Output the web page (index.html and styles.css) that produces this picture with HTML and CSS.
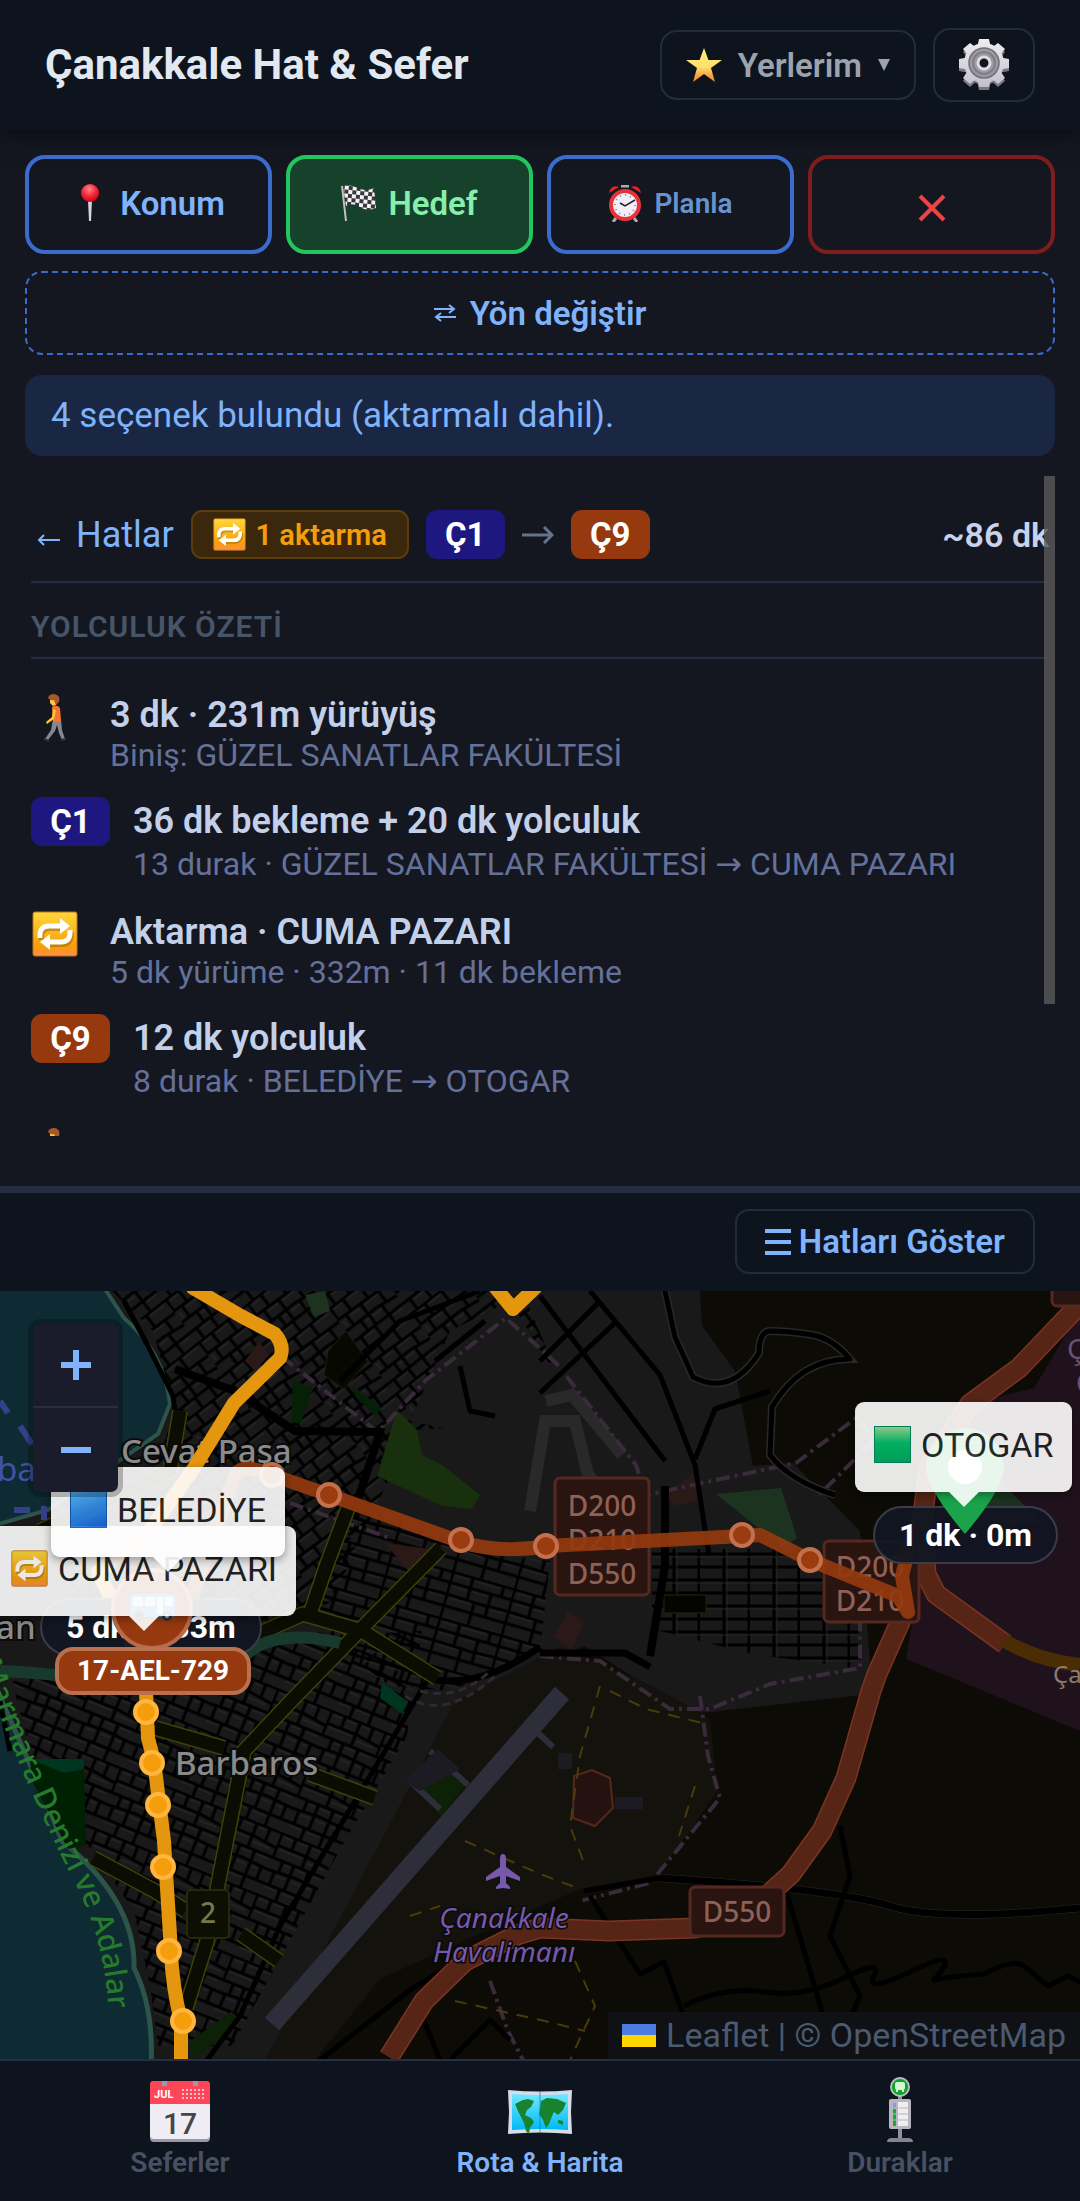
FILE: index.html
```html
<!DOCTYPE html>
<html lang="tr">
<head>
    <meta charset="UTF-8">
    <meta name="viewport" content="width=device-width, initial-scale=1.0">
    <title>Çanakkale Hat &amp; Sefer</title>
    <link rel="stylesheet" href="styles.css">
</head>
<body>

    <!-- Shared icons -->
    <svg class="sprite" aria-hidden="true">
        <defs>
            <linearGradient id="gold" x1="0" y1="0" x2="0" y2="1">
                <stop offset="0" stop-color="#fff07a"/><stop offset=".55" stop-color="#ffdf6b"/><stop offset="1" stop-color="#f57c1f"/>
            </linearGradient>
            <linearGradient id="silver" x1="0" y1="0" x2="0" y2="1">
                <stop offset="0" stop-color="#eeeeee"/><stop offset="1" stop-color="#c3c0cc"/>
            </linearGradient>
            <linearGradient id="orange" x1="0" y1="0" x2="0" y2="1">
                <stop offset="0" stop-color="#ffd83c"/><stop offset=".8" stop-color="#f79d08"/><stop offset="1" stop-color="#ff8c50"/>
            </linearGradient>
            <linearGradient id="sea" x1="0" y1="0" x2="0" y2="1">
                <stop offset="0" stop-color="#72e8ff"/><stop offset="1" stop-color="#00b9f5"/>
            </linearGradient>
            <radialGradient id="red" cx=".45" cy=".3" r=".7">
                <stop offset="0" stop-color="#ff8a8f"/><stop offset=".5" stop-color="#fb2c3c"/><stop offset="1" stop-color="#c80014"/>
            </radialGradient>
            <pattern id="checks" width="8" height="8" patternUnits="userSpaceOnUse" patternTransform="rotate(6)">
                <rect width="8" height="8" fill="#f4f4f4"/>
                <path d="M0 0h4v4H0zM4 4h4v4H4z" fill="#39353c"/>
            </pattern>
            <symbol id="repeat" viewBox="0 0 46 46">
                <rect x="1" y="1" width="44" height="44" rx="2" fill="url(#orange)" stroke="#b9731d"/>
                <path d="M9 29q-1-12 9-12h12M39 21q1 12-9 12H18" stroke="#8a5a10" stroke-opacity=".45" fill="none" stroke-width="6"/>
                <path d="M8 27q-1-12 9-12h12M38 19q1 12-9 12H17" stroke="#fff" fill="none" stroke-width="5"/>
                <path d="M28 7l10 8-10 8zM18 23L8 31l10 8z" fill="#fff"/>
            </symbol>
            <symbol id="walker" viewBox="0 0 22 48">
                <path d="M9 25l-2 11-6 9 3 1 7-9 2-6 2 8 3 7 3-1-3-9-1-11z" fill="#85868f"/>
                <path d="M0 45l5 2M17 46l5-1" stroke="#333" stroke-width="2"/>
                <path d="M8 13q5-3 8 1l1 13q-4 2-8 0z" fill="#f9742b"/>
                <path d="M9 15l-1 8-6 5 1 2 7-5 2-9z" fill="#ffc53d"/>
                <path d="M6 4q4-4 7 0l-1 7-3 1-3-3z" fill="#ffc53d"/>
                <path d="M4 4q1-4 6-4 7 1 5 8l-3 3-2-5q-4 1-6-2z" fill="#a4582b"/>
            </symbol>
        </defs>
    </svg>

    <header class="app-header">
        <h1>Çanakkale Hat &amp; Sefer</h1>
        <button class="header-button" type="button">
            <svg width="36" height="34" viewBox="0 0 36 34" aria-hidden="true"><path d="M18 0l4.400 12H36L25 20l4 14-11-8-11 8 4-14L0 12h13.600z" fill="url(#gold)"/></svg>
            <span>Yerlerim</span>
            <svg width="12" height="12" viewBox="0 0 12 12" aria-hidden="true"><path d="M0 0h12L6 12z" fill="#9ca3af"/></svg>
        </button>
        <button class="header-button gear-button" type="button" aria-label="Ayarlar">
            <svg width="50" height="52" viewBox="0 0 50 52" aria-hidden="true">
                <g fill="#7a7684" transform="translate(0 3)">
                    <circle cx="25" cy="24" r="19"/>
                    <path d="M20 0h10l2 10H18zM20 48h10l2-10H18zM0 20v9l11 2V18zM50 20v9l-11 2V18zM4 10l7-6 8 6-8 9zM46 10l-7-6-8 6 8 9zM4 39l7 6 8-7-9-8zM46 39l-7 6-8-7 9-8z"/>
                </g>
                <g fill="url(#silver)">
                    <circle cx="25" cy="24" r="20"/>
                    <path d="M20 0h10l2 10H18zM20 48h10l2-10H18zM0 20v9l11 2V18zM50 20v9l-11 2V18zM4 10l7-6 8 6-8 9zM46 10l-7-6-8 6 8 9zM4 39l7 6 8-7-9-8zM46 39l-7 6-8-7 9-8z"/>
                </g>
                <circle cx="25" cy="24" r="15" fill="#9c9aa3" stroke="#6f6d76" stroke-width="1.500"/>
                <circle cx="25" cy="24" r="11" fill="none" stroke="#7f7d87" stroke-width="2"/>
                <circle cx="25" cy="24" r="6" fill="#101620" stroke="#dedee2" stroke-width="3"/>
            </svg>
        </button>
    </header>

    <main class="planner">
        <div class="actions">
            <button class="action action-from" type="button">
                <svg width="20" height="38" viewBox="0 0 20 38" aria-hidden="true"><path d="M8 16h4l-1 21h-2z" fill="#d6d3e2"/><circle cx="10" cy="9" r="9" fill="url(#red)"/></svg>
                Konum
            </button>
            <button class="action action-target" type="button">
                <svg width="35" height="37" viewBox="0 0 35 37" aria-hidden="true"><path d="M2 1q7-2 15 2t16 0l2 20q-9 4-16-1T5 21z" fill="url(#checks)"/><path d="M1 1l4 35" stroke="#c4bfc4" stroke-width="2"/></svg>
                Hedef
            </button>
            <button class="action action-plan" type="button">
                <svg width="34" height="37" viewBox="0 0 34 37" aria-hidden="true">
                    <path d="M8 33l-3 4M26 33l3 4M13 1h8" stroke="#aaa" stroke-width="3"/>
                    <path d="M1 8Q3-1 11 2zM33 8Q31-1 23 2z" fill="#e62222"/>
                    <circle cx="17" cy="20" r="14" fill="#f2eef8" stroke="#e8323a" stroke-width="4"/>
                    <circle cx="17" cy="20" r="10" fill="none" stroke="#8c8796" stroke-width="2" stroke-dasharray="1 4.200"/>
                    <path d="M12 18l5 3 10-6" fill="none" stroke="#222" stroke-width="1.500"/>
                </svg>
                Planla
            </button>
            <button class="action action-clear" type="button" aria-label="Temizle">
                <svg width="28" height="28" viewBox="0 0 28 28" aria-hidden="true"><path d="M2 2l24 24M26 2L2 26" stroke="#ef4444" stroke-width="4"/></svg>
            </button>
        </div>

        <button class="reverse" type="button">
            <svg width="22" height="18" viewBox="0 0 22 18" aria-hidden="true"><path d="M0 5h20M15 1l5 4-5 4M22 13H2M7 9l-5 4 5 4" fill="none" stroke="#7fb3fb" stroke-width="2"/></svg>
            Yön değiştir
        </button>

        <p class="status">4 seçenek bulundu (aktarmalı dahil).</p>

        <section class="details">
            <div class="details-scroll">
                <div class="route-head">
                    <a class="back" href="#">
                        <svg width="23" height="12" viewBox="0 0 23 12" aria-hidden="true"><path d="M23 6H2M7 1L2 6l5 5" fill="none" stroke="#7fb3fb" stroke-width="2"/></svg>
                        Hatlar
                    </a>
                    <span class="transfer"><svg width="33" height="33" aria-hidden="true"><use href="#repeat"/></svg>1 aktarma</span>
                    <span class="line line-c1">Ç1</span>
                    <svg width="32" height="18" viewBox="0 0 32 18" aria-hidden="true"><path d="M0 9h30M22 1l8 8-8 8" fill="none" stroke="#64748b" stroke-width="3"/></svg>
                    <span class="line line-c9">Ç9</span>
                    <strong class="total">~86 dk</strong>
                </div>
                <h2>YOLCULUK ÖZETİ</h2>

                <ol class="steps">
                    <li class="step">
                        <svg class="walk-icon" width="22" height="48" aria-hidden="true"><use href="#walker"/></svg>
                        <div><h3>3 dk · 231m yürüyüş</h3><p>Biniş: GÜZEL SANATLAR FAKÜLTESİ</p></div>
                    </li>
                    <li class="step step-ride">
                        <span class="line line-c1">Ç1</span>
                        <div><h3>36 dk bekleme + 20 dk yolculuk</h3><p>13 durak · GÜZEL SANATLAR FAKÜLTESİ → CUMA PAZARI</p></div>
                    </li>
                    <li class="step">
                        <svg class="repeat-icon" width="46" height="46" aria-hidden="true"><use href="#repeat"/></svg>
                        <div><h3>Aktarma · CUMA PAZARI</h3><p>5 dk yürüme · 332m · 11 dk bekleme</p></div>
                    </li>
                    <li class="step step-ride">
                        <span class="line line-c9">Ç9</span>
                        <div><h3>12 dk yolculuk</h3><p>8 durak · BELEDİYE → OTOGAR</p></div>
                    </li>
                    <li class="step">
                        <svg class="walk-icon" width="22" height="48" aria-hidden="true"><use href="#walker"/></svg>
                    </li>
                </ol>
            </div>
            <span class="scroll-thumb"></span>
        </section>
    </main>

    <div class="map-toolbar">
        <button type="button">
            <svg width="26" height="26" viewBox="0 0 26 26" aria-hidden="true"><path d="M0 2h26M0 13h26M0 24h26" stroke="#7fb3fb" stroke-width="4"/></svg>
            Hatları Göster
        </button>
    </div>

    <section class="map" aria-label="Harita">
        <svg class="map-tiles" viewBox="0 0 1080 769" preserveAspectRatio="xMinYMin slice">
            <defs>
                <pattern id="blocksA" width="62" height="54" patternUnits="userSpaceOnUse" patternTransform="rotate(-38)">
                    <path d="M0 1h62M0 15l62 2M0 29h40l22 3M0 42h62M1 0v16M17 0v15M38 0v16M10 15v14M28 16v26M50 16v14M18 29v13M44 30v24M8 42v12M26 42v12" fill="none" stroke="#000" stroke-width="3"/>
                    <path d="M4 4h10M20 4h15M41 4h18M13 19h12M31 19h16M21 33h5M31 33h11M47 45h12M4 19v7M11 45h12" stroke="#2b2b2b"/>
                </pattern>
                <pattern id="blocksB" width="58" height="66" patternUnits="userSpaceOnUse" patternTransform="rotate(22)">
                    <path d="M0 1h58M0 14h34l24 3M0 27h58M0 40l30-2 28 2M0 54h58M1 0v27M16 0v14M32 0v28M46 0v16M12 27v12M24 27v27M40 28v38M8 40v14M20 54v12M52 40v14" fill="none" stroke="#000" stroke-width="3"/>
                    <path d="M4 4h9M19 4h10M35 4h8M4 17h25M35 20h18M15 30h6M27 30h10M43 30h12M11 43h10M27 43h10M43 43h6M4 57h13M23 57h14" stroke="#2b2b2b"/>
                </pattern>
                <pattern id="blocksC" width="64" height="48" patternUnits="userSpaceOnUse" patternTransform="rotate(16)">
                    <path d="M0 1h64M0 12h64M0 24l36 1 28-1M0 36h64M1 0v48M22 0v24M44 12v24M30 25v23M54 0v12" fill="none" stroke="#000" stroke-width="3"/>
                    <path d="M4 4h15M25 4h26M4 15h15M25 15h16M4 27h23M47 27h14" stroke="#292929"/>
                </pattern>
                <pattern id="blocksD" width="50" height="26" patternUnits="userSpaceOnUse">
                    <path d="M0 3h50M0 16h50M24 0v26M49 0v26" stroke="#000" stroke-width="3"/>
                    <path d="M0 6h50M27 0v26" stroke="#242424"/>
                </pattern>
                <path id="coastText" d="M-20 372Q26 498 74 590T104 800"/>
            </defs>

            <!-- Land use -->
            <rect width="1080" height="769" fill="#0c0b06"/>
            <path d="M0 0h700l2 35 33 45 18 95 40-3 67 68 11 145v18l-169 19-55-27-62-40-90 35-77 113-150 266H0z" fill="#191919"/>
            <path d="M455 410l105-54 95 40 55 32 8 72-60 84-78 14-90 40-110 50-65 81H265z" fill="#13120d"/>
            <path d="M1080 20l-46 77-64 16-50 170-14 85 174 72z" fill="#1f121d"/>
            <path d="M945 195l45-15 50 50-40 6z" fill="#1b3320"/>
            <path d="M-5 395Q34 480 62 550q74 60 72 127 20 40 17 97H-5z" fill="#0e2a33" stroke="#2d544a" stroke-width="5"/>
            <path d="M-5-5h108l21 32q40 34 46 86l-12 30-110 76-53 15z" fill="#0e2a33" stroke="#2d544a" stroke-width="4"/>

            <!-- Streets -->
            <path d="M112 0h410l30 70-50 60-100 30-70 150-60 30H70v-60l70-60 35-100-22-80z" fill="url(#blocksA)"/>
            <path d="M12 390l130-20 90-20 190-10-15 105-65 110-110 200H158l-8-60-16-75-41-60-50-54z" fill="url(#blocksB)"/>
            <path d="M350 210l120 50 80 10-10 90-90 40-60-5-80-60z" fill="url(#blocksC)"/>
            <path d="M652 258h200l10 120-110-15-100-25z" fill="url(#blocksD)"/>
            <path d="M450 40l60-30 50 80-60 60-90-20zM405 140l70-5 90 60-20 60-140-70z" fill="#191919"/>

            <!-- Parks -->
            <path d="M397 119l20 20 5 25 20 10 38 30-8 14-30-3-65-30z" fill="#18300e"/>
            <path d="M293 88l20 10-12 34h-10zM353 95l28 22-6 8-20-20z" fill="#062008"/>
            <path d="M305 4l20-4 5 20-16 6z" fill="#1d3320"/>
            <path d="M30 470l54-2 2 86-18 4-36-68z" fill="#002004"/>
            <path d="M30 468h54v10l-20 4zM382 391l26 20-6 12-22-16z" fill="#00351f"/>
            <path d="M190 750l42-30 6 12-44 37zM420 500l30-18 15 12-24 32z" fill="#0d2106"/>
            <path d="M716 203l65-6 16 50-14 10z" fill="#1c3320"/>
            <path d="M328 60l18-20 22 30-24 28-20-14z" fill="#080803" stroke="#20200c"/>
            <path d="M665 205l30-24 4 28-22 6zM554 345l14-25 16 10-12 30zM245 70l14-20 10 14-14 16zM385 252l60 8-32 26z" fill="#2b1918"/>
            <path d="M574 485l18-6 18 8 3 30-18 18-22-8z" fill="#241110" stroke="#572819" stroke-width="2"/>
            <path d="M664 304h42v18h-42z" fill="#050500" stroke="#242406"/>

            <!-- Monument and faint paths -->
            <path d="M530 220l15-90h30l12 50 24 45M546 110l26-6 50 60" fill="none" stroke="#292929" stroke-width="12"/>
            <g fill="none" stroke="#3a2b3c" stroke-width="4" stroke-dasharray="14 5 3 5">
                <path d="M282 66l70 55 26 20 48-52 80-62 50 45 80 102 10 30 65-14 85-18 60-45 20 20-60 60"/>
                <path d="M540 365l60 5 70 48h40l60-25 90-16v-50M700 405l8 60 12 42-70 85-70 18M490 690l18 50 15 29M290 212l100 35"/>
            </g>
            <g fill="none" stroke="#493b0b" stroke-width="2" stroke-dasharray="12 9">
                <path d="M465 550l75 33 40 15M600 395l-20 70-10 70 15 40M610 400l36 18 60 15M695 495l-16 50M410 625l30-10M455 710l90 20 40 10M575 670l20 45-25 54"/>
            </g>

            <!-- Local roads -->
            <g fill="none" stroke="#282828" stroke-width="8">
                <path d="M665 0l10 46 18 40q38 20 66-24 0-20 10-22 20 0 44 4 20 4 37 24-50 0-78 48l-2 48q20 26 65 40"/>
                <path d="M660 587q180 12 230 28t190 2"/>
            </g>
            <g fill="none" stroke="#000" stroke-width="5" stroke-linejoin="round">
                <path d="M665 0l10 46 18 40q38 20 66-24 0-20 10-22 20 0 44 4 20 4 37 24-50 0-78 48l-2 48q20 26 65 40M695 168l20-50 55-18M590 0l70 84 35 90 14 90M540 5l125 165M600 10l-60 60M617 30l-77 72"/>
                <path d="M584 600l76-13M590 605l50 78 24-12 22 60-4 38M684 715q40-20 80-14t80-14 30-2 40-6 20 10q20-4 50-6 30-16 40-8l24 20 20-10 20 10"/>
                <path d="M840 535l10 50-20 60 30 60-30 70M786 600l30 100 20 70M124 10l24 45 25 50 4 30M340 90l60-60 80-30M460 75l10 45 25 5M435 70l50-40"/>
                <path d="M430 385l-60 100-90 150-40 90-45 60M320 769l90-70 50-30M420 720l20 49M450 769q30-30 40-40l20 20M10 460l-10-50"/>
            </g>
            <path d="M660 587q180 12 230 28t190 2" fill="none" stroke="#000" stroke-width="7"/>
            <path d="M175 78l60 22 60 40 85 1-28 86M665 195v80l-15 90" fill="none" stroke="#000" stroke-width="8"/>
            <path d="M540 362h85l25 14M430 388q50 10 110-32" fill="none" stroke="#000" stroke-width="7"/>

            <!-- Secondary roads -->
            <g fill="none" stroke-linejoin="round">
                <path d="M348 217l-21 56-17 50M441 257l-79 80-71 73-47 50-24 123-13 67-21 67M258 343l45-20 59 17 75 47M155 437l69 20M310 483l65 24M93 567l62 33 31 20M241 643l38 27M180 120l-10 60-130 60" stroke="#404008" stroke-width="16"/>
                <path d="M348 217l-21 56-17 50M441 257l-79 80-71 73-47 50-24 123-13 67-21 67M258 343l45-20 59 17 75 47M155 437l69 20M310 483l65 24M93 567l62 33 31 20M241 643l38 27M180 120l-10 60-130 60" stroke="#0b0d02" stroke-width="13"/>
            </g>
            <path d="M0 380q80 4 120 14t90-8l50-32q30-14 80-2" fill="none" stroke="#183a2c" stroke-width="12"/>
            <path d="M405 405q40 26 90-20M420 400q40 10 70-20" fill="none" stroke="#302730" stroke-width="3" stroke-dasharray="8 5"/>

            <!-- Runway -->
            <path d="M410 490l30 28M430 460l38 34M525 430l28 26" fill="none" stroke="#2e2d3a" stroke-width="6"/>
            <path d="M272 733L562 402" stroke="#2e2d3a" stroke-width="19"/>
            <path d="M404 490l34-32 22 20-40 22zM558 462h14v16h-14zM615 506h28v12h-28z" fill="#1c1a22"/>

            <!-- Highways -->
            <g fill="none" stroke-linejoin="round">
                <path d="M1080 13l-61 64-49 36-41 64-7 53 4 53 10 20 69 50M905 320l-28 63-6 17-25 87-24 53-31 43-44 40-52 14-86 3-69-3-23 7-52 26-41 40-35 56" stroke="#7a3423" stroke-width="21"/>
                <path d="M1080 13l-61 64-49 36-41 64-7 53 4 53 10 20 69 50M905 320l-28 63-6 17-25 87-24 53-31 43-44 40-52 14-86 3-69-3-23 7-52 26-41 40-35 56" stroke="#572516" stroke-width="18"/>
                <path d="M1005 350q34 20 75 24" stroke="#4a2c05" stroke-width="14"/>
            </g>

            <!-- Road shields -->
            <g class="shield">
                <rect x="555" y="187" width="94" height="117" rx="5"/>
                <rect x="824" y="250" width="95" height="81" rx="5"/>
                <rect x="690" y="596" width="94" height="49" rx="5"/>
                <rect x="1052" y="-20" width="60" height="35" rx="5"/>
            </g>
            <g class="shield-text">
                <text x="602" y="225">D200</text>
                <text x="602" y="259">D210</text>
                <text x="602" y="293">D550</text>
                <text x="870" y="286">D200</text>
                <text x="870" y="320">D210</text>
                <text x="737" y="631">D550</text>
            </g>
            <rect x="187" y="599" width="42" height="48" rx="4" fill="#0d0f02" stroke="#25290a" stroke-width="2"/>
            <text class="shield-two" x="208" y="632">2</text>

            <!-- Place names -->
            <g class="place">
                <text x="121" y="172">Cevat Paşa</text>
                <text x="175" y="484">Barbaros</text>
                <text x="-4" y="348">an</text>
            </g>
            <text class="ferry" x="-3" y="190">ba</text>
            <path d="M0 110l8 12M20 135l12 18M14 219h16M44 215v14" stroke="#35408a" stroke-width="6"/>
            <g class="airport">
                <text x="504" y="637">Çanakkale</text>
                <text x="504" y="671">Havalimanı</text>
            </g>
            <path d="M503 563q3 0 3 5v8l14 10v4l-14-5v7l4 4v2l-7-1-7 1v-2l4-4v-7l-14 5v-4l14-10v-8q0-5 3-5z" fill="#7659ad"/>
            <g class="purple-place"><text x="1067" y="68">Ç</text><text x="1076" y="102">O</text></g>
            <text class="small-place" x="1053" y="392">Ça</text>
            <text class="region"><textPath href="#coastText">Marmara Denizi ve Adalar</textPath></text>

            <!-- Route lines -->
            <g fill="none" stroke-linecap="round" stroke-linejoin="round" stroke-width="14">
                <path d="M193-3l48 28 34 18q10 12 5 24l-46 45-40 65-44 62-52 42 30 60 18 60 2 46 6 23 10 80 7 110q1 34 10 70v40M496-3l17 21 22-21" stroke="#e5960f"/>
                <path d="M193 303l20-58 22-60q6-14 37-1l57 20 132 47q40 12 86 4l196-10 17-1 50 25 88 36 10 16-6-36 8-32" stroke="#943a0f" stroke-opacity=".92"/>
            </g>
            <g fill="#9a3b10" stroke="#c3704e" stroke-width="4">
                <circle cx="272" cy="184" r="11"/><circle cx="329" cy="204" r="11"/><circle cx="461" cy="249" r="11"/>
                <circle cx="546" cy="255" r="11"/><circle cx="742" cy="244" r="11"/><circle cx="810" cy="269" r="11"/>
            </g>
            <g fill="#f59e0b" stroke="#ffb540" stroke-width="4">
                <circle cx="146" cy="421" r="11"/><circle cx="152" cy="472" r="11"/><circle cx="158" cy="514" r="11"/>
                <circle cx="163" cy="576" r="11"/><circle cx="169" cy="660" r="11"/><circle cx="183" cy="730" r="11"/>
            </g>
        </svg>

        <!-- Markers -->
        <span class="pill pill-transfer">5 dk · 333m</span>
        <span class="pill pill-end">1 dk · 0m</span>
        <svg class="pin" width="78" height="106" viewBox="0 0 78 106" aria-hidden="true"><path d="M39 106Q0 60 0 39a39 39 0 0 1 78 0q0 21-39 67z" fill="#1aa34a"/><circle cx="39" cy="39" r="17" fill="#fff"/></svg>
        <span class="bus">
            <svg width="46" height="28" viewBox="0 0 46 28" aria-hidden="true">
                <rect width="45" height="23" rx="3" fill="#3b86dd"/><path d="M3 3h10v9H3zM15 3h10v9H15zM27 3h6v17h-6zM35 3h8v9h-8z" fill="#cce9fa"/>
                <circle cx="9" cy="22" r="5" fill="#333"/><circle cx="37" cy="22" r="5" fill="#333"/><circle cx="37" cy="22" r="2" fill="#ccc"/>
            </svg>
        </span>
        <span class="plate">17-AEL-729</span>
        <div class="tip tip-transfer"><svg width="37" height="37" aria-hidden="true"><use href="#repeat"/></svg>CUMA PAZARI</div>
        <div class="tip tip-board"><i class="square square-blue"></i>BELEDİYE</div>
        <div class="tip tip-end"><i class="square square-green"></i>OTOGAR</div>

        <div class="zoom">
            <button type="button" aria-label="Yakınlaştır"><svg width="30" height="30" viewBox="0 0 30 30"><path d="M15 0v30M0 15h30" stroke="#7fb3fb" stroke-width="6"/></svg></button>
            <button type="button" aria-label="Uzaklaştır"><svg width="30" height="30" viewBox="0 0 30 30"><path d="M0 15h30" stroke="#7fb3fb" stroke-width="6"/></svg></button>
        </div>
        <div class="attribution">
            <i class="flag"></i><a href="#">Leaflet</a> | © <a href="#">OpenStreetMap</a>
        </div>
    </section>

    <nav class="tabs">
        <a href="#">
            <svg width="60" height="62" viewBox="0 0 60 62" aria-hidden="true">
                <rect width="60" height="61" rx="4" fill="#9c98ab"/>
                <path d="M0 20h60v34q0 4-4 4H4q-4 0-4-4z" fill="#efedf3"/>
                <path d="M0 4q0-4 4-4h8v5h5V0h26v5h5V0h8q4 0 4 4v19H0z" fill="#ff4658"/>
                <path d="M32 9h24M32 13h24M32 17h24" stroke="#ffc3c9" stroke-width="2" stroke-dasharray="2 2"/>
                <text x="4" y="17" class="cal-month">JUL</text>
                <text x="30" y="53" class="cal-day">17</text>
            </svg>
            Seferler
        </a>
        <a href="#" class="active" aria-current="page">
            <svg width="64" height="62" viewBox="0 0 64 62" aria-hidden="true">
                <path d="M0 9q32 3 64 0l-1 22 1 22q-32-3-64 0l1-22z" fill="#d6dcec"/>
                <path d="M4 13q28 2 56 0v36q-28-2-56 0z" fill="url(#sea)"/>
                <path d="M7 23l8-4 5-1 6 2-3 6-4 3-2 5 6 3 3 4-4 6-1 6-3-3-2-8-3-6-3-6zM33 20l6-3 10 1 9 4-3 7-5 5-4-3-2 4-3 8-3 4-3-8-4-6 1-5zM50 39l5 1v4l-5-2z" fill="#18832c"/>
                <path d="M32 10v41" stroke="#0876a8" stroke-opacity=".35" stroke-width="2"/>
            </svg>
            Rota &amp; Harita
        </a>
        <a href="#">
            <svg width="28" height="66" viewBox="0 0 28 66" aria-hidden="true">
                <path d="M14 18v44" stroke="#92919d" stroke-width="4"/><path d="M1 65q0-4 5-4h16q5 0 5 4z" fill="#868391"/>
                <circle cx="14" cy="10" r="9" fill="#12a32d" stroke="#b8bac0" stroke-width="2"/>
                <rect x="9" y="5" width="10" height="8" rx="2" fill="#d6f6d8"/><path d="M10 14h2M16 14h2" stroke="#d6f6d8" stroke-width="2"/>
                <rect x="3" y="22" width="22" height="30" rx="2" fill="#b7b6c0"/>
                <path d="M12 25h10v24H12z" fill="#eee"/><path d="M7 26h3v5H7z" fill="#8f96e8"/><path d="M7 32h3v17H7z" fill="#17ac24"/>
                <path d="M6 31h17M6 37h17M6 43h17" stroke="#b7b6c0"/>
            </svg>
            Duraklar
        </a>
    </nav>

</body>
</html>
```
FILE: styles.css
```css
* {
    box-sizing: border-box;
}
body {
    margin: 0;
    min-height: 100vh;
    display: flex;
    flex-direction: column;
    background: #141720;
    color: #e2e8f0;
    font-family: Roboto, "DejaVu Sans", "Liberation Sans", sans-serif;
    font-size: 34px;
}
h1, h2, h3, p, ol {
    margin: 0;
    padding: 0;
}
button {
    font: inherit;
    color: inherit;
    background: none;
    cursor: pointer;
}
a {
    color: inherit;
    text-decoration: none;
}
svg {
    flex: none;
    display: block;
}
.sprite {
    position: absolute;
    width: 0;
    height: 0;
}

/* Header */
.app-header {
    display: flex;
    align-items: center;
    gap: 17px;
    height: 130px;
    padding: 0 45px;
    background: #0d141e;
    box-shadow: 0 4px 22px rgba(0, 0, 0, 0.5);
}
.app-header h1 {
    margin-right: auto;
    font-size: 42px;
    line-height: 50px;
    font-weight: 700;
}
.header-button {
    display: flex;
    align-items: center;
    gap: 16px;
    height: 70px;
    padding: 0 24px;
    border: 2px solid #232c3d;
    border-radius: 17px;
    color: #9ca3af;
    font-size: 33px;
    font-weight: 600;
}
.gear-button {
    height: 74px;
}

/* Planner */
.planner {
    padding: 25px 25px 50px;
}
.actions {
    display: grid;
    grid-template-columns: repeat(4, 1fr);
    gap: 14px;
}
.action {
    display: flex;
    align-items: center;
    justify-content: center;
    gap: 12px;
    height: 99px;
    padding-bottom: 4px;
    border: 4px solid #3b6bcc;
    border-radius: 20px;
    color: #7fb3fb;
    font-size: 33px;
    font-weight: 600;
}
.action-from svg {
    margin: 0 8px;
}
.action-target {
    border-color: #22c55e;
    background: #16412b;
    color: #86efac;
}
.action-plan {
    color: #6593cf;
    font-size: 28px;
}
.action-clear {
    padding: 6px 0 0;
    border-color: #7f1d1d;
}
.reverse {
    display: flex;
    align-items: center;
    justify-content: center;
    gap: 14px;
    width: 100%;
    height: 84px;
    margin: 17px 0 20px;
    border: 2px dashed #3b6bcc;
    border-radius: 17px;
    color: #7fb3fb;
    font-size: 33px;
    font-weight: 600;
}
.status {
    padding: 20px 26px;
    border-radius: 17px;
    background: #1a2744;
    color: #7fb3fb;
    font-size: 35px;
    line-height: 41px;
}

/* Route details */
.details {
    position: relative;
    margin-top: 20px;
}
.details-scroll {
    height: 30vh;
    padding: 0 6px;
    overflow: hidden;
}
.scroll-thumb {
    position: absolute;
    top: 0;
    right: 0;
    width: 11px;
    height: 80%;
    background: rgba(90, 90, 90, 0.8);
}
.route-head {
    display: flex;
    align-items: center;
    gap: 17px;
    height: 107px;
    padding-top: 12px;
    border-bottom: 2px solid #232c40;
}
.back {
    display: flex;
    align-items: center;
    gap: 16px;
    padding-left: 6px;
    color: #7fb3fb;
    font-size: 36px;
}
.back svg {
    margin-top: 10px;
}
.transfer {
    display: flex;
    align-items: center;
    gap: 10px;
    height: 49px;
    padding: 0 20px;
    border: 2px solid #5b3c0b;
    border-radius: 11px;
    background: #3b280c;
    color: #f59e0b;
    font-size: 29px;
    font-weight: 600;
}
.line {
    flex: none;
    width: 79px;
    height: 49px;
    border-radius: 11px;
    color: #fff;
    font-size: 33px;
    line-height: 49px;
    font-weight: 700;
    text-align: center;
}
.line-c1 {
    background: #1e1780;
}
.line-c9 {
    background: #96390f;
}
.total {
    margin-left: auto;
    color: #c7d2ec;
    font-size: 34px;
    font-weight: 600;
}
.details h2 {
    padding: 26px 0 12px;
    border-bottom: 2px solid #232c40;
    color: #475569;
    font-size: 30px;
    line-height: 36px;
    font-weight: 600;
    letter-spacing: 1px;
}
.steps {
    display: grid;
    gap: 23px;
    padding-top: 30px;
    list-style: none;
}
.step {
    display: flex;
    gap: 31px;
    min-height: 85px;
    padding-top: 5px;
}
.step h3 {
    color: #c3d0ea;
    font-size: 36px;
    line-height: 42px;
    font-weight: 600;
}
.step p {
    color: #64719a;
    font-size: 32px;
    line-height: 38px;
}
.step-ride {
    gap: 23px;
    padding-top: 0;
}
.step-ride div {
    padding-top: 3px;
}
.step-ride p {
    padding-top: 3px;
}
.walk-icon {
    margin: 0 13px;
}
.repeat-icon {
    margin: 0 1px;
}

/* Map toolbar */
.map-toolbar {
    display: flex;
    justify-content: flex-end;
    padding: 16px 45px 17px;
    border-top: 7px solid #242d42;
    background: #0d141e;
}
.map-toolbar button {
    display: flex;
    align-items: center;
    gap: 8px;
    height: 65px;
    padding: 0 28px;
    border: 2px solid #232c3d;
    border-radius: 14px;
    color: #7fb3fb;
    font-size: 33px;
    font-weight: 600;
}

/* Map */
.map {
    position: relative;
    flex: 1;
    min-height: 600px;
    overflow: hidden;
    background: #0c0b06;
}
.map-tiles {
    position: absolute;
    width: 100%;
    height: 100%;
    font-family: "Noto Sans", sans-serif;
}
.shield rect {
    fill: #29140f;
    stroke: #55291f;
    stroke-width: 3;
}
.shield-text {
    fill: #8f6055;
    font-size: 28px;
    font-weight: 500;
    text-anchor: middle;
}
.shield-two {
    fill: #77774f;
    font-size: 28px;
    font-weight: 500;
    text-anchor: middle;
}
.place {
    fill: #8a8a8a;
    stroke: #0a0a0a;
    stroke-width: 4px;
    paint-order: stroke;
    font-size: 33px;
    font-weight: 500;
}
.ferry {
    fill: #4350a5;
    font-size: 33px;
}
.airport {
    fill: #7659ad;
    stroke: #0a0a0a;
    stroke-width: 3px;
    paint-order: stroke;
    font-size: 28px;
    font-style: italic;
    text-anchor: middle;
}
.purple-place {
    fill: #6b5170;
    font-size: 28px;
}
.small-place {
    fill: #8c7c68;
    font-size: 24px;
}
.region {
    fill: #267a2c;
    font-size: 30px;
    font-weight: 500;
}
.pill {
    position: absolute;
    padding: 0 24px;
    border: 2px solid #3a3d47;
    border-radius: 30px;
    background: rgba(18, 22, 34, 0.95);
    color: #fff;
    font-size: 32px;
    line-height: 54px;
    font-weight: 700;
    white-space: nowrap;
}
.pill-transfer {
    left: 40px;
    top: 307px;
}
.pill-end {
    left: 873px;
    top: 215px;
}
.pin {
    position: absolute;
    left: 926px;
    top: 137px;
}
.bus {
    position: absolute;
    left: 111px;
    top: 277px;
    width: 82px;
    height: 82px;
    padding: 22px 15px;
    border: 4px solid #b96a4c;
    border-radius: 50%;
    background: #96390f;
}
.plate {
    position: absolute;
    left: 55px;
    top: 356px;
    padding: 0 18px;
    border: 4px solid #b9704f;
    border-radius: 18px;
    background: #96390f;
    color: #fff;
    font-size: 28px;
    line-height: 40px;
    font-weight: 700;
}
.tip {
    position: absolute;
    display: flex;
    gap: 10px;
    height: 90px;
    padding: 24px 19px;
    border-radius: 9px;
    background: #fff;
    box-shadow: 0 3px 8px rgba(0, 0, 0, 0.4);
    color: #222;
    font-size: 34px;
    line-height: 38px;
    opacity: 0.9;
    white-space: nowrap;
}
.tip::after {
    content: "";
    position: absolute;
    top: 100%;
    left: 50%;
    margin-left: -15px;
    border: 15px solid transparent;
    border-top-color: #fff;
    border-bottom: 0;
}
.tip-transfer {
    left: -8px;
    top: 235px;
}
.tip-board {
    left: 51px;
    top: 176px;
}
.tip-end {
    left: 855px;
    top: 111px;
}
.square {
    width: 37px;
    height: 37px;
}
.square-blue {
    background: linear-gradient(160deg, #54b9ff, #1465d8);
    border: 1px solid #1259b8;
}
.square-green {
    background: linear-gradient(#9bdc96, #00c26c 45%, #00ad63);
    border: 1px solid #008a61;
}
.zoom {
    position: absolute;
    left: 28px;
    top: 28px;
    border: 5px solid rgba(0, 0, 0, 0.25);
    border-radius: 12px;
}
.zoom button {
    display: flex;
    align-items: center;
    justify-content: center;
    width: 85px;
    height: 84px;
    border: 0;
    border-radius: 0 0 7px 7px;
    background: #1a1c2c;
}
.zoom button:first-child {
    border-bottom: 2px solid #252e42;
    border-radius: 7px 7px 0 0;
}
.attribution {
    position: absolute;
    right: 0;
    bottom: 0;
    padding: 0 14px;
    background: rgba(17, 19, 24, 0.85);
    color: #4b5a70;
    font-size: 34px;
    line-height: 47px;
}
.flag {
    display: inline-block;
    width: 34px;
    height: 23px;
    margin-right: 10px;
    background: linear-gradient(#4c7be1 50%, #ffd500 50%);
}

/* Bottom tabs */
.tabs {
    display: grid;
    grid-template-columns: repeat(3, 1fr);
    height: 142px;
    border-top: 2px solid #252e42;
    background: #0d141e;
}
.tabs a {
    display: flex;
    flex-direction: column;
    align-items: center;
    justify-content: flex-end;
    gap: 3px;
    padding-bottom: 21px;
    color: #475163;
    font-size: 28px;
    line-height: 34px;
    font-weight: 600;
}
.tabs .active {
    color: #7fb3fb;
}
.cal-month {
    fill: #fff;
    font-size: 11px;
    font-weight: 700;
}
.cal-day {
    fill: #47454a;
    font-size: 30px;
    font-weight: 500;
    text-anchor: middle;
}
```
